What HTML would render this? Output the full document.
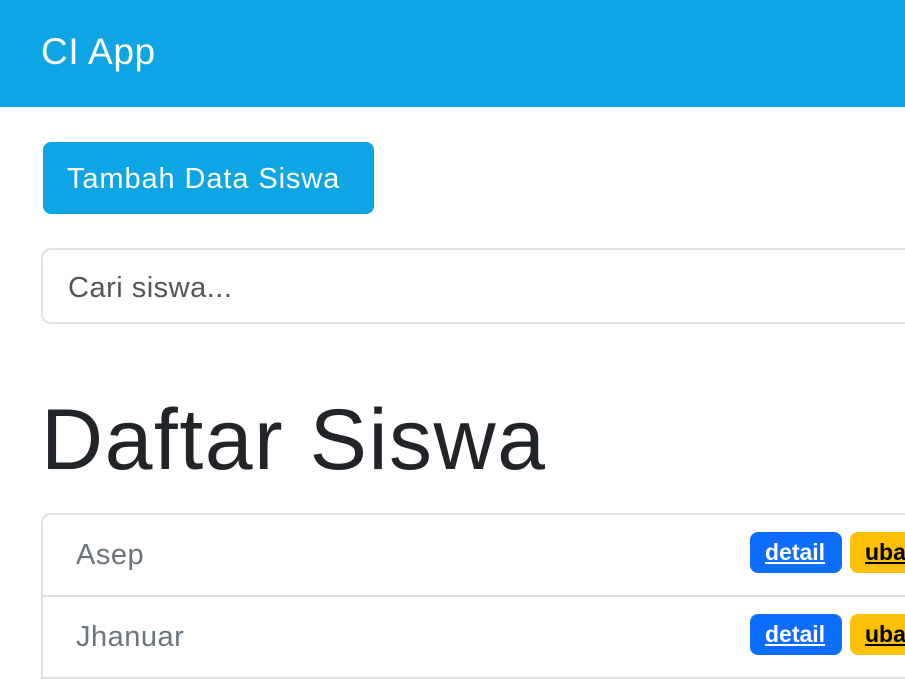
<!DOCTYPE html>
<html><head><style>
*{box-sizing:border-box;margin:0;padding:0}
html,body{width:905px;height:679px;overflow:hidden}
body{background:#fff;font-family:"Liberation Sans",sans-serif;position:relative}
.nav{position:absolute;left:0;top:0;width:905px;height:107px;background:#0ea5e4}
.brand{position:absolute;left:41px;top:31px;color:#fff;font-size:37px;letter-spacing:0.6px}
.btn{position:absolute;left:43px;top:142px;width:331px;height:72px;background:#0ea5e4;border-radius:8px;color:#fff;font-size:29px;line-height:74px;padding-left:24px;letter-spacing:0.9px}
.inp{position:absolute;left:41px;top:248px;width:864px;height:76px;border:2px solid #dee2e6;border-right:none;border-radius:10px 0 0 10px;color:#555;font-size:29px;line-height:76px;padding-left:25px;letter-spacing:0.5px}
h1{position:absolute;left:41px;top:391px;font-size:86px;color:#212529;font-weight:normal;letter-spacing:1.5px}
.list{position:absolute;left:41px;top:513px;width:864px;height:166px;border:2px solid #dee2e6;border-right:none;border-bottom:none;border-radius:10px 0 0 0;overflow:hidden}
.row{position:absolute;left:0;width:900px;height:82px;border-bottom:2px solid #dee2e6}
.name{position:absolute;left:33px;top:24px;font-size:29px;color:#6c757d;letter-spacing:0.5px}
.b{position:absolute;top:17px;height:41px;border-radius:8px;font-size:23px;font-weight:bold;text-decoration:underline;line-height:41px;padding:0 15px}
.d{left:707px;width:92px;background:#0d6efd;color:#fff}
.u{left:807px;width:100px;background:#ffc107;color:#000}
</style></head><body>
<div class="nav"><div class="brand">CI App</div></div>
<div class="btn">Tambah Data Siswa</div>
<div class="inp">Cari siswa...</div>
<h1>Daftar Siswa</h1>
<div class="list">
<div class="row" style="top:0"><div class="name">Asep</div><div class="b d">detail</div><div class="b u">ubah</div></div>
<div class="row" style="top:82px"><div class="name">Jhanuar</div><div class="b d">detail</div><div class="b u">ubah</div></div>
</div>
</body></html>
